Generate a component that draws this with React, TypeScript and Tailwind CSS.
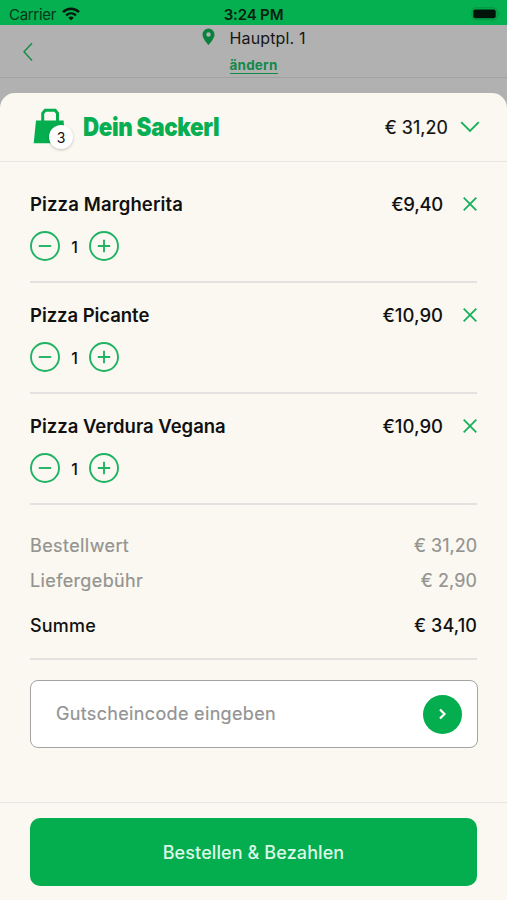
import { useState } from "react";

const initialItems = [
    { id: 1, name: "Pizza Margherita", price: "€9,40", amount: 1, nameSpacing: "tracking-[0.12px]", priceSpacing: "tracking-[-0.3px]" },
    { id: 2, name: "Pizza Picante", price: "€10,90", amount: 1, nameSpacing: "tracking-[-0.05px]", priceSpacing: "tracking-[0px]" },
    { id: 3, name: "Pizza Verdura Vegana", price: "€10,90", amount: 1, nameSpacing: "tracking-[-0.02px]", priceSpacing: "tracking-[0px]" },
];

function StatusBar() {
    return (
        <div className="h-[25px] bg-[#04b04f] grid grid-cols-3 items-center pl-[9px] pr-[6px] text-[15px] text-[#06351b]">
            <div className="flex items-center gap-[6px]">
                <span className="leading-[25px] tracking-[-0.3px] pt-[2px]">Carrier</span>
                <svg width="18" height="14" viewBox="0 0 18 14" className="text-[#03170b]">
                    <path d="M1 5.2C5.6 .7 12.4 .7 17 5.2" fill="none" stroke="currentColor" strokeWidth="2.5" />
                    <path d="M4.1 8.4c2.9-2.8 6.9-2.8 9.8 0" fill="none" stroke="currentColor" strokeWidth="2.3" />
                    <path d="M6.3 10.7c1.6-1.5 3.8-1.5 5.4 0L9 13.4z" fill="currentColor" />
                </svg>
            </div>
            <span className="text-center font-semibold leading-[25px] tracking-[-0.15px] pr-[3px] pt-[2px] text-[#04210f] whitespace-nowrap">3:24 PM</span>
            <svg width="30" height="14" viewBox="0 0 30 14" className="justify-self-end">
                <rect x="1" y=".8" width="25" height="12" rx="3.5" fill="none" stroke="#079344" />
                <rect x="2.3" y="2.5" width="22.4" height="8.7" rx="2" fill="#02140a" />
                <path d="M27.4 4.7v4.2c1.4-.6 1.4-3.6 0-4.2z" fill="#079344" />
            </svg>
        </div>
    );
}

function AddressHeader() {
    return (
        <header className="h-[53px] border-b border-[#a2a2a2] flex items-start justify-between">
            <button className="pl-[22px] pt-[17px] w-[100px]">
                <svg width="12" height="20" viewBox="0 0 12 20" fill="none" stroke="#128c49" strokeWidth="1.4">
                    <path d="M10 1.2 2 9.8 10 18.4" />
                </svg>
            </button>
            <div className="flex items-start w-[107px]">
                <svg width="13" height="18" viewBox="0 0 13 18" className="mt-[3px] mr-[15px] shrink-0">
                    <path fillRule="evenodd" d="M6.5.5A6 6 0 0 0 .5 6.5C.5 11 6.5 17 6.5 17S12.5 11 12.5 6.5A6 6 0 0 0 6.5.5zm0 3.8a2.2 2.2 0 1 1 0 4.4 2.2 2.2 0 0 1 0-4.4z" fill="#09823d" />
                </svg>
                <div className="flex flex-col items-start">
                    <span className="text-[16px] leading-[26px] tracking-[0.15px] text-[#161616] whitespace-nowrap">Hauptpl. 1</span>
                    <a className="text-[13.5px] leading-[15px] tracking-[0.2px] mt-[7px] font-bold text-[#12894a] border-b-[1.5px] border-[#12894a]">ändern</a>
                </div>
            </div>
            <div className="w-[97px]" />
        </header>
    );
}

function AmountButton({ plus = false, onClick }: { plus?: boolean; onClick: () => void }) {
    return (
        <button onClick={onClick} className="size-[30px]">
            <svg width="30" height="30" viewBox="0 0 30 30" fill="none" stroke="#1fb364">
                <circle cx="15" cy="15" r="14" strokeWidth="1.9" />
                <path d={plus ? "M8.8 15h12.4M15 8.8v12.4" : "M8.8 15h12.4"} strokeWidth="1.9" />
            </svg>
        </button>
    );
}

export default function App() {
    const [items, setItems] = useState(initialItems);
    const [voucher, setVoucher] = useState("");

    const changeAmount = (id: number, diff: number) => {
        setItems(items.map((item) => (item.id === id ? { ...item, amount: Math.max(1, item.amount + diff) } : item)));
    };

    const removeItem = (id: number) => {
        setItems(items.filter((item) => item.id !== id));
    };

    return (
        <div className="h-[900px] w-[507px] overflow-hidden bg-[#b1b1b1] flex flex-col font-['Inter',sans-serif] text-[#111111]">
            <StatusBar />
            <AddressHeader />

            <main className="mt-[15px] flex-1 rounded-t-[15px] bg-[#fbf8f1] flex flex-col">
                <div className="h-[69px] shrink-0 border-b border-[#e6e5e0] flex items-center pl-[33px] pr-[27px]">
                    <div className="relative w-[40px] h-[44px] mt-[4px]">
                        <svg width="32" height="36" viewBox="0 0 32 36" className="absolute left-0 top-[1px]">
                            <path d="M3 12.4H30.6L32 35.2H.7z" fill="#04ae4f" />
                            <path d="M9.7 13V5.2L12.2 2.3h10L24.5 5.2V13" fill="none" stroke="#04ae4f" strokeWidth="3" />
                        </svg>
                        <span className="absolute left-[16px] top-[18px] size-[24px] rounded-full bg-white shadow-[0_1px_3px_rgba(0,0,0,0.22)] flex items-center justify-center text-[14px]">
                            3
                        </span>
                    </div>
                    <h1 className="ml-[10px] w-[165px] origin-left scale-x-[0.86] text-[26px] font-black tracking-[-0.4px] text-[#08ae52] leading-[30px] mt-[-1px] whitespace-nowrap">
                        Dein Sackerl
                    </h1>
                    <span className="ml-auto text-[18px] tracking-[0.05px] [-webkit-text-stroke:0.2px] whitespace-nowrap">€ 31,20</span>
                    <svg width="20" height="12" viewBox="0 0 20 12" className="ml-[12px]" fill="none" stroke="#17b15c" strokeWidth="1.9">
                        <path d="M1.2 1.2 10 10 18.8 1.2" />
                    </svg>
                </div>

                <div className="px-[30px] pt-[10px]">
                    {items.map((item) => (
                        <div key={item.id} className="h-[111px] border-b-[2px] border-[#e3e2e0] pt-[20px]">
                            <div className="flex items-center h-[26px]">
                                <span className={`text-[18.5px] font-semibold whitespace-nowrap ${item.nameSpacing}`}>{item.name}</span>
                                <span className={`ml-auto text-[18.5px] font-medium whitespace-nowrap ${item.priceSpacing}`}>{item.price}</span>
                                <button onClick={() => removeItem(item.id)} className="ml-[20px] mt-[-3px]">
                                    <svg width="14" height="14" viewBox="0 0 14 14" fill="none" stroke="#17b15c" strokeWidth="1.8">
                                        <path d="m.7.7 12.6 12.6M13.3.7.7 13.3" />
                                    </svg>
                                </button>
                            </div>
                            <div className="flex items-center mt-[13px]">
                                <AmountButton onClick={() => changeAmount(item.id, -1)} />
                                <span className="w-[29px] pt-px text-center text-[16px] font-medium">{item.amount}</span>
                                <AmountButton plus onClick={() => changeAmount(item.id, 1)} />
                            </div>
                        </div>
                    ))}

                    <div className="h-[155px] border-b-[2px] border-[#e3e2e0] pt-[28px] text-[18px]">
                        <div className="flex justify-between leading-[26px] text-[#939390] [-webkit-text-stroke:0.2px]">
                            <span className="tracking-[0.42px]">Bestellwert</span>
                            <span>€ 31,20</span>
                        </div>
                        <div className="flex justify-between leading-[26px] mt-[9px] text-[#939390] [-webkit-text-stroke:0.2px]">
                            <span className="tracking-[0.37px]">Liefergebühr</span>
                            <span className="tracking-[0.1px]">€ 2,90</span>
                        </div>
                        <div className="flex justify-between leading-[26px] mt-[19px] font-medium">
                            <span className="tracking-[0.2px]">Summe</span>
                            <span className="tracking-[0.1px]">€ 34,10</span>
                        </div>
                    </div>

                    <div className="mt-[20px] h-[68px] w-[448px] rounded-[8px] border-[1.5px] border-[#a3a3a2] bg-white flex items-center justify-between pl-[25px] pr-[15px]">
                        <input
                            type="text"
                            value={voucher}
                            onChange={(e) => setVoucher(e.target.value)}
                            placeholder="Gutscheincode eingeben"
                            className="w-[300px] pb-[2px] text-[18px] tracking-[0.34px] outline-none placeholder:text-[#939393] [-webkit-text-stroke:0.2px]"
                        />
                        <button className="size-[39px] rounded-full bg-[#04ae4f] flex items-center justify-center">
                            <svg width="9" height="12" viewBox="0 0 9 12" fill="none" stroke="white" strokeWidth="2.2">
                                <path d="m2 1.5 4.5 4.5L2 10.5" />
                            </svg>
                        </button>
                    </div>
                </div>

                <footer className="mt-auto h-[98px] border-t border-[#e6e5e0] px-[30px] pt-[15px]">
                    <button className="w-full h-[68px] rounded-[10px] bg-[#04ae4f] text-[18px] tracking-[0.1px] font-medium text-[#dcf8e7]">
                        Bestellen &amp; Bezahlen
                    </button>
                </footer>
            </main>
        </div>
    );
}
